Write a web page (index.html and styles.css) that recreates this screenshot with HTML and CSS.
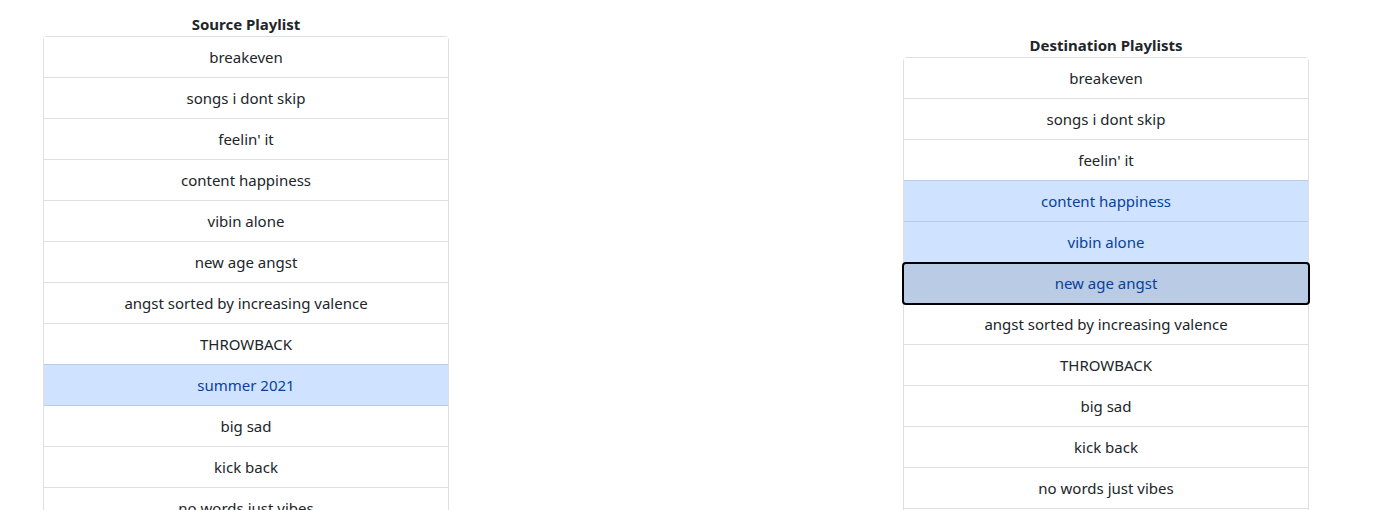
FILE: index.html
```html
<!DOCTYPE html>
<html>
<head>
<meta charset="utf-8">
<link rel="stylesheet" href="styles.css">
</head>
<body>
<div class="page">
  <section class="col col-source">
    <div class="title">Source Playlist</div>
    <ul class="list">
      <li class="item">breakeven</li>
      <li class="item">songs i dont skip</li>
      <li class="item">feelin' it</li>
      <li class="item">content happiness</li>
      <li class="item">vibin alone</li>
      <li class="item">new age angst</li>
      <li class="item">angst sorted by increasing valence</li>
      <li class="item">THROWBACK</li>
      <li class="item selected">summer 2021</li>
      <li class="item">big sad</li>
      <li class="item">kick back</li>
      <li class="item">no words just vibes</li>
      <li class="item">late night drives</li>
    </ul>
  </section>
  <section class="col col-dest">
    <div class="title">Destination Playlists</div>
    <ul class="list">
      <li class="item">breakeven</li>
      <li class="item">songs i dont skip</li>
      <li class="item">feelin' it</li>
      <li class="item selected">content happiness</li>
      <li class="item selected">vibin alone</li>
      <li class="item selected focused">new age angst</li>
      <li class="item">angst sorted by increasing valence</li>
      <li class="item">THROWBACK</li>
      <li class="item">big sad</li>
      <li class="item">kick back</li>
      <li class="item">no words just vibes</li>
      <li class="item">late night drives</li>
    </ul>
  </section>
</div>
</body>
</html>
```
FILE: styles.css
```css
* { box-sizing: border-box; }
html, body { margin: 0; padding: 0; background: #fff; }
body {
  font-family: "Noto Sans", "Open Sans", "Liberation Sans", sans-serif;
  font-size: 15px;
  color: #212529;
  overflow: hidden;
}
.page {
  display: flex;
  justify-content: space-between;
  align-items: flex-start;
  padding: 12px 82px 0 43px;
}
.col { width: 406px; }
.col-dest { margin-top: 21px; }
.title {
  text-align: center;
  font-weight: 700;
  line-height: 24px;
  height: 24px;
}
.list {
  list-style: none;
  margin: 0;
  padding: 0;
  border: 1px solid #dfdfdf;
  border-radius: 4px;
}
.item {
  position: relative;
  text-align: center;
  line-height: 24px;
  padding: 8px 16px;
  border-top: 1px solid #dfdfdf;
  background: #fff;
}
.item:first-child { border-top: 0; }
.item.selected {
  background: #cfe2ff;
  color: #084298;
  border-top-color: #b6cde8;
}
.item.selected + .item { border-top-color: #b6cde8; }
.item.focused {
  background: #bacbe6;
}
.item.focused::after {
  content: "";
  position: absolute;
  top: -1px;
  bottom: -2px;
  left: -2px;
  right: -2px;
  border: 2px solid #000;
  border-radius: 4px;
  z-index: 1;
}
```
